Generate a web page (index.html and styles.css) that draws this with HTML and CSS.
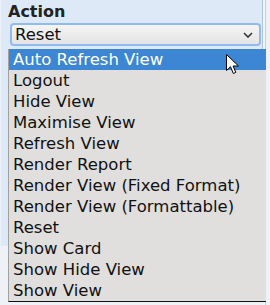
FILE: index.html
```html
<!DOCTYPE html>
<html>
<head>
<title>Action</title>
<link rel="stylesheet" href="styles.css">
</head>
<body>
<div class="page">
<div class="panel">
<div class="label">Action</div>
<div class="select">
<span class="select-value">Reset</span>
<svg class="chevron" width="10" height="6" viewBox="0 0 10 6"><path d="M1 1 L5 5 L9 1" fill="none" stroke="#333" stroke-width="1.6"/></svg>
</div>
</div>
<div class="edge"></div>
</div>

<div class="menu">
<div class="item active">Auto Refresh View</div>
<div class="item">Logout</div>
<div class="item">Hide View</div>
<div class="item">Maximise View</div>
<div class="item">Refresh View</div>
<div class="item">Render Report</div>
<div class="item">Render View (Fixed Format)</div>
<div class="item">Render View (Formattable)</div>
<div class="item">Reset</div>
<div class="item">Show Card</div>
<div class="item">Show Hide View</div>
<div class="item">Show View</div>
</div>

<svg class="cursor" width="14" height="21" viewBox="0 0 14 21"><path d="M0.5 0.5 L0.5 16.5 L4.5 12.8 L7.3 19.5 L9.8 18.4 L7.1 12 L12.5 12 Z" fill="#fff" stroke="#000" stroke-width="1"/></svg>
</body>
</html>
```
FILE: styles.css
```css
/* Action picker with its list opened */

body
{ margin: 0;
background-color: #eef2f6;
font-family: "DejaVu Sans", sans-serif;
}

div.page
{ display: flex;
}

div.panel
{ width: 263px;
height: 246px;
background-color: #dde9f6;
border-left: 1px solid #eaf1f9;
border-right: 1px solid #aac6e6;
box-sizing: border-box;
padding-top: 2px;
}

div.edge
{ width: 3px;
border-left: 2px solid #f4f6f8;
border-right: 1px solid #c4cfdb;
height: 305px;
box-sizing: border-box;
}

div.label
{ font-size: 16px;
font-weight: bold;
color: #222;
padding-left: 7px;
line-height: 19px;
}

div.select
{ margin: 2px 0 0 9px;
width: 251px;
height: 23px;
box-sizing: border-box;
border: 2px solid #8fbbf0;
border-radius: 4px;
background: linear-gradient(#f5f5f5, #e4e4e4);
display: flex;
align-items: center;
justify-content: space-between;
padding: 0 6px 0 3px;
}

span.select-value
{ font-size: 16.5px;
color: #111;
}

/* Opened list */

div.menu
{ position: absolute;
left: 8px;
top: 49px;
width: 258px;
background-color: #e0dfdd;
border-left: 1px solid #a0a0a0;
border-bottom: 1px solid #111;
box-sizing: border-box;
}

div.item
{ height: 21px;
line-height: 22px;
font-size: 16.5px;
padding-left: 4px;
color: #111;
white-space: nowrap;
}

div.item.active
{ background-color: #3d86d4;
color: #fff;
}

svg.cursor
{ position: absolute;
left: 226px;
top: 54px;
}
```
